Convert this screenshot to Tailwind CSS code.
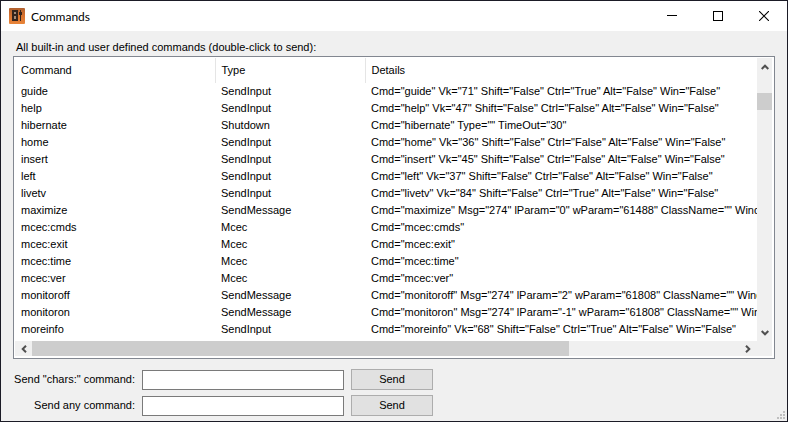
<!DOCTYPE html>
<html lang="en">
<head>
<meta charset="utf-8">
<meta name="viewport" content="width=device-width, initial-scale=1">
<title>Commands</title>
<script src="https://cdn.jsdelivr.net/npm/@tailwindcss/browser@4"></script>
</head>
<body class="font-['Liberation_Sans',Arial,sans-serif] text-[11px] leading-[17px] text-black">
<div class="flex h-screen flex-col border border-[#1b1b26] bg-[#f0f0f0]">
  <header class="flex h-[30px] shrink-0 items-center bg-white pl-2">
    <svg class="size-4 shrink-0" viewBox="0 0 16 16" aria-hidden="true">
      <defs><linearGradient id="g" x1="0" y1="0" x2="0" y2="1"><stop offset="0" stop-color="#b0602f"/><stop offset=".5" stop-color="#d9722f"/><stop offset="1" stop-color="#e8853a"/></linearGradient></defs>
      <rect width="16" height="16" rx="1" fill="url(#g)"/>
      <path d="M3 2h6v11H3z" fill="#35241c"/>
      <path d="M5 4h2v2H5zM5 8h2v3H5z" fill="#a58a78"/>
      <path d="M11 2h1v11h-1zM10 4h3v3h-3z" fill="#35241c"/>
    </svg>
    <h1 class="ml-[6px] flex-1 font-['Lato','Open_Sans',sans-serif] text-[12px]">Commands</h1>
    <div class="flex">
      <button aria-label="Minimize" class="flex h-7 w-[46px] items-center justify-center"><svg width="10" height="10" shape-rendering="crispEdges"><path d="M0 4.500h10" stroke="#000"/></svg></button>
      <button aria-label="Maximize" class="flex h-7 w-[46px] items-center justify-center"><svg width="10" height="10" shape-rendering="crispEdges"><path d="M.5.5h9v9h-9z" stroke="#000" fill="none"/></svg></button>
      <button aria-label="Close" class="flex h-7 w-[46px] items-center justify-center"><svg width="10" height="10"><path d="M0 0l10 10M10 0L0 10" stroke="#000" stroke-width="1.100"/></svg></button>
    </div>
  </header>
  <main class="flex min-h-0 flex-1 flex-col px-3 pt-2">
    <h2 id="list-label" class="shrink-0 pl-[3px]">All built-in and user defined commands (double-click to send):</h2>
    <div class="flex min-h-0 flex-1 flex-col border border-[#828790] bg-white p-px">
      <div class="flex min-h-0 flex-1">
        <div class="min-w-0 flex-1 overflow-hidden">
          <table aria-labelledby="list-label" class="w-full table-fixed border-collapse text-left whitespace-nowrap">
            <colgroup><col class="w-[200px]"><col class="w-[150px]"><col></colgroup>
            <thead>
              <tr class="h-[25px]">
                <th class="border-r border-[#e5e5e5] p-0 pl-[6px] font-normal">Command</th>
                <th class="border-r border-[#e5e5e5] p-0 pl-[6px] font-normal">Type</th>
                <th class="p-0 pl-[6px] font-normal">Details</th>
              </tr>
            </thead>
            <tbody id="rows"></tbody>
          </table>
        </div>
        <div class="mr-px flex w-[15px] shrink-0 flex-col bg-[#f0f0f0]">
          <button aria-label="Scroll up" class="flex h-[17px] shrink-0 items-center justify-center"><svg width="8" height="6"><path d="M.7 5L4 1.700L7.300 5" stroke="#505050" stroke-width="2" fill="none"/></svg></button>
          <div class="flex-1 pt-[18px]"><div class="h-[17px] bg-[#cdcdcd]"></div></div>
          <button aria-label="Scroll down" class="flex h-[17px] shrink-0 items-center justify-center"><svg width="8" height="6"><path d="M.7 1L4 4.300L7.300 1" stroke="#505050" stroke-width="2" fill="none"/></svg></button>
        </div>
      </div>
      <div class="mr-px mb-px flex h-[15px] shrink-0 bg-[#f0f0f0] pr-4">
        <button aria-label="Scroll left" class="flex w-[17px] shrink-0 items-center justify-center"><svg width="6" height="8"><path d="M5 .7L1.700 4L5 7.300" stroke="#505050" stroke-width="2" fill="none"/></svg></button>
        <div class="flex-1"><div class="h-full w-[76%] bg-[#cdcdcd]"></div></div>
        <button aria-label="Scroll right" class="flex w-[17px] shrink-0 items-center justify-center"><svg width="6" height="8"><path d="M1 .7L4.300 4L1 7.300" stroke="#505050" stroke-width="2" fill="none"/></svg></button>
      </div>
    </div>
    <div class="grid shrink-0 grid-cols-[122px_202px_82px] gap-x-[7px] gap-y-[5px] pt-[10px] pb-[5px]">
      <label for="chars" class="self-center text-right whitespace-nowrap">Send "chars:" command:</label>
      <input id="chars" type="text" class="h-5 self-end border border-[#7a7a7a] bg-white px-1 outline-none">
      <button class="h-[21px] border border-[#adadad] bg-[#e1e1e1]">Send</button>
      <label for="any" class="self-center text-right whitespace-nowrap">Send any command:</label>
      <input id="any" type="text" class="h-5 self-end border border-[#7a7a7a] bg-white px-1 outline-none">
      <button class="h-[21px] border border-[#adadad] bg-[#e1e1e1]">Send</button>
    </div>
  </main>
  <svg class="absolute right-[3px] bottom-[3px]" width="8" height="8" fill="#bfbfbf" aria-hidden="true"><path d="M6 0h2v2h-2zM3 3h2v2h-2zM6 3h2v2h-2zM0 6h2v2h-2zM3 6h2v2h-2zM6 6h2v2h-2z"/></svg>
</div>
<script>
const keys = (name, vk, ctrl) => [name, "SendInput", `Cmd="${name}" Vk="${vk}" Shift="False" Ctrl="${ctrl}" Alt="False" Win="False"`];
const mcec = name => ["mcec:" + name, "Mcec", `Cmd="mcec:${name}"`];
const msg = (name, l, w) => [name, "SendMessage", `Cmd="${name}" Msg="274" lParam="${l}" wParam="${w}" ClassName="" WindowName=""`];
const commands = [
  keys("guide", 71, "True"), keys("help", 47, "False"),
  ["hibernate", "Shutdown", 'Cmd="hibernate" Type="" TimeOut="30"'],
  keys("home", 36, "False"), keys("insert", 45, "False"), keys("left", 37, "False"), keys("livetv", 84, "True"),
  msg("maximize", "0", 61488),
  mcec("cmds"), mcec("exit"), mcec("time"), mcec("ver"),
  msg("monitoroff", "2", 61808), msg("monitoron", "-1", 61808),
  keys("moreinfo", 68, "True")
];
const body = document.getElementById("rows");
for (const command of commands) {
  const row = body.insertRow();
  row.className = "h-[17px]";
  for (const text of command) {
    const cell = row.insertCell();
    cell.className = "overflow-hidden p-0 pl-[6px]";
    cell.textContent = text;
  }
}
</script>
</body>
</html>
